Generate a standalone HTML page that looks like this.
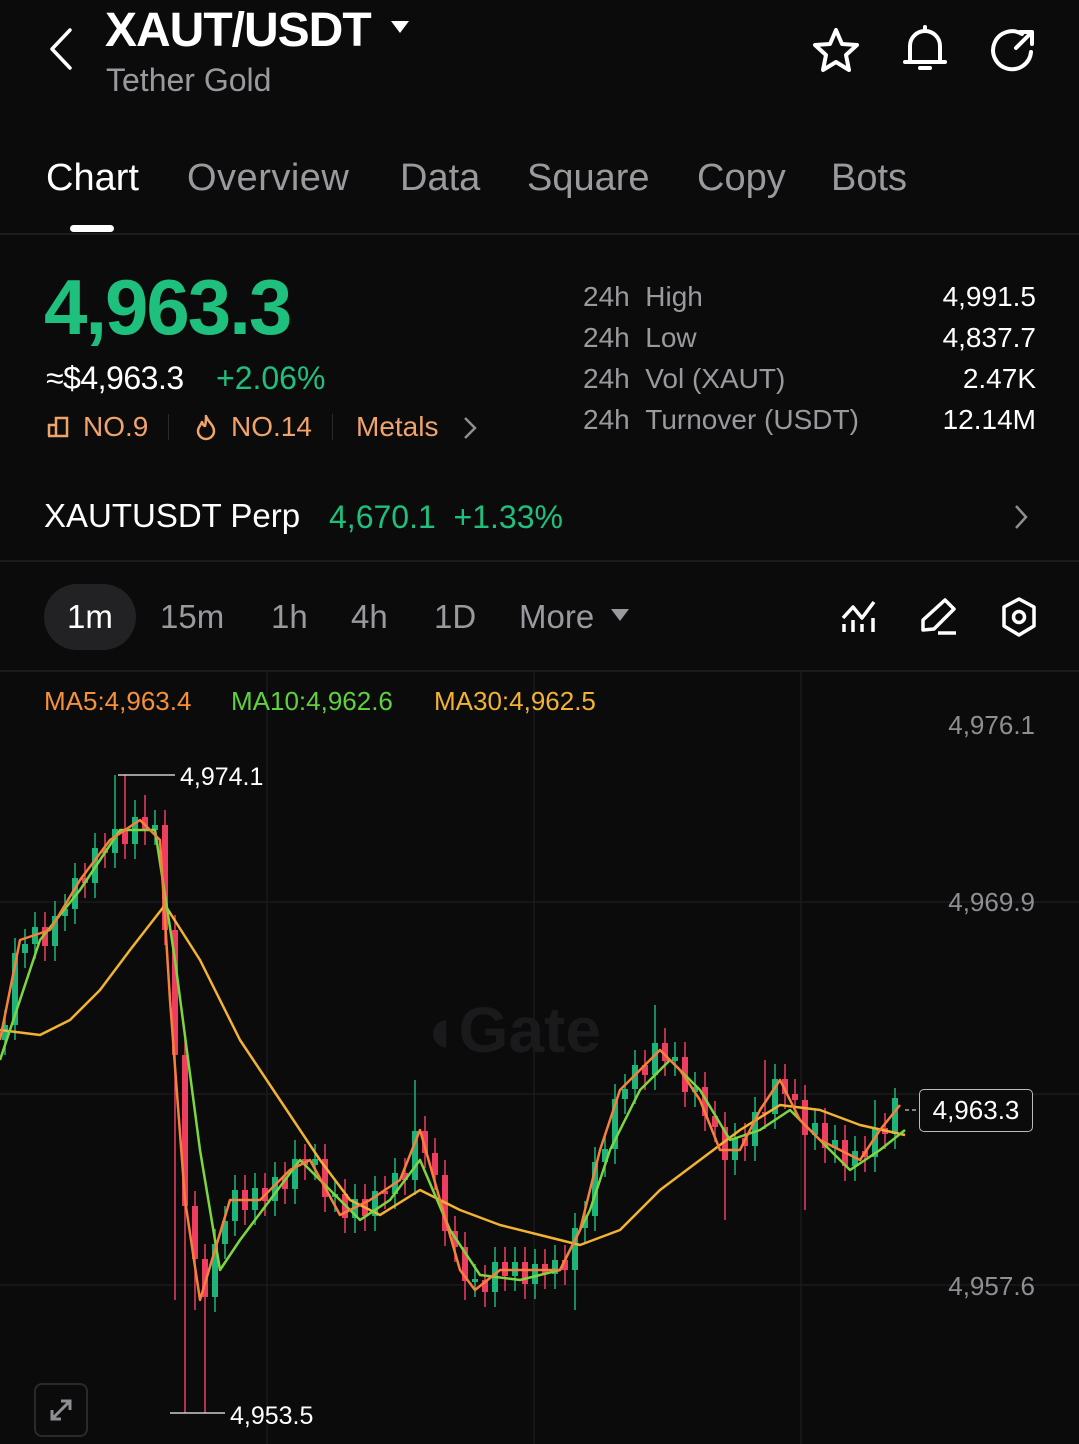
<!DOCTYPE html>
<html><head><meta charset="utf-8"><style>
*{margin:0;padding:0;box-sizing:border-box}
body{width:1079px;height:1444px;background:#0b0b0b;color:#fff;font-family:"Liberation Sans",sans-serif;position:relative;overflow:hidden}
.a{position:absolute;white-space:nowrap}
.g{color:#8e8e93}
</style></head><body>
<svg class="a" style="left:44px;top:26px" width="34" height="46" viewBox="0 0 34 46"><path d="M26 4 L8 23 L26 42" fill="none" stroke="#fff" stroke-width="3.5" stroke-linecap="round" stroke-linejoin="round"/></svg>
<div class="a" style="left:105px;top:3px;font-size:48px;font-weight:bold;letter-spacing:-1px">XAUT/USDT</div>
<svg class="a" style="left:390px;top:20px" width="20" height="14"><path d="M1 1 L19 1 L10 13Z" fill="#fff"/></svg>
<div class="a" style="left:106px;top:62px;font-size:32px;color:#9a9a9e">Tether Gold</div>
<svg class="a" style="left:810px;top:26px" width="52" height="50" viewBox="0 0 52 50"><path d="M26 4 L32 18 L47 19 L36 29 L39 44 L26 36 L13 44 L16 29 L5 19 L20 18Z" fill="none" stroke="#fff" stroke-width="4" stroke-linejoin="round"/></svg>
<svg class="a" style="left:900px;top:24px" width="50" height="52" viewBox="0 0 50 52"><path d="M10 38 L10 22 A15 15 0 0 1 40 22 L40 38 Z M5 38 L45 38 M25 3 L25 7 M20 44 L30 44" fill="none" stroke="#fff" stroke-width="4" stroke-linejoin="round" stroke-linecap="round"/></svg>
<svg class="a" style="left:988px;top:26px" width="50" height="50" viewBox="0 0 50 50"><path d="M34 8 A19 19 0 1 0 43 26" fill="none" stroke="#fff" stroke-width="4" stroke-linecap="round"/><path d="M28 22 L43 7 M32 6 L44 6 L44 18" fill="none" stroke="#fff" stroke-width="4" stroke-linecap="round" stroke-linejoin="round"/></svg>

<div class="a" style="left:46px;top:157px;font-size:38px">Chart</div>
<div class="a" style="left:187px;top:157px;font-size:38px;color:#9a9a9e;letter-spacing:0.5px">Overview</div>
<div class="a" style="left:400px;top:157px;font-size:38px;color:#9a9a9e">Data</div>
<div class="a" style="left:527px;top:157px;font-size:38px;color:#9a9a9e">Square</div>
<div class="a" style="left:697px;top:157px;font-size:38px;color:#9a9a9e">Copy</div>
<div class="a" style="left:831px;top:157px;font-size:38px;color:#9a9a9e">Bots</div>
<div class="a" style="left:70px;top:225px;width:44px;height:7px;border-radius:4px;background:#fff"></div>
<div class="a" style="left:0;top:233px;width:1079px;height:2px;background:#1c1c1e"></div>

<div class="a" style="left:44px;top:262px;font-size:78px;font-weight:bold;color:#1fc07e;letter-spacing:-2px">4,963.3</div>
<div class="a" style="left:46px;top:360px;font-size:32px;letter-spacing:-0.5px">≈$4,963.3</div>
<div class="a" style="left:216px;top:360px;font-size:32px;color:#1fc07e">+2.06%</div>
<svg class="a" style="left:46px;top:415px" width="24" height="24" viewBox="0 0 24 24"><path d="M3 21 L3 10 L10 10 L10 21 M10 21 L10 3 L21 3 L21 21 Z M2 21 L22 21" fill="none" stroke="#f0a36b" stroke-width="2.5"/></svg>
<div class="a" style="left:83px;top:411px;font-size:28px;color:#f0a36b">NO.9</div>
<div class="a" style="left:168px;top:414px;width:1px;height:26px;background:#2a2a2c"></div>
<svg class="a" style="left:194px;top:413px" width="24" height="28" viewBox="0 0 24 28"><path d="M12 3 C14 9 20 12 20 18 A8 8 0 0 1 4 18 C4 14 7 12 8 9 C9 12 10 13 11 13 C12 10 12 6 12 3Z" fill="none" stroke="#f0a36b" stroke-width="2.5" stroke-linejoin="round"/></svg>
<div class="a" style="left:231px;top:411px;font-size:28px;color:#f0a36b">NO.14</div>
<div class="a" style="left:332px;top:414px;width:1px;height:26px;background:#2a2a2c"></div>
<div class="a" style="left:356px;top:411px;font-size:28px;color:#f0a36b">Metals</div>
<svg class="a" style="left:462px;top:416px" width="16" height="24"><path d="M3 2 L13 12 L3 22" fill="none" stroke="#8e8e93" stroke-width="2.5"/></svg>

<div class="a" style="left:583px;top:276px;font-size:28px;line-height:41px;color:#9a9a9e">24h&nbsp;&nbsp;High<br>24h&nbsp;&nbsp;Low<br>24h&nbsp;&nbsp;Vol (XAUT)<br>24h&nbsp;&nbsp;Turnover (USDT)</div>
<div class="a" style="right:43px;top:276px;font-size:28px;line-height:41px;text-align:right">4,991.5<br>4,837.7<br>2.47K<br>12.14M</div>

<div class="a" style="left:44px;top:497px;font-size:33px">XAUTUSDT Perp</div>
<div class="a" style="left:329px;top:499px;font-size:32px;color:#1fc07e">4,670.1&nbsp;&nbsp;+1.33%</div>
<svg class="a" style="left:1013px;top:504px" width="16" height="26"><path d="M3 2 L13 13 L3 24" fill="none" stroke="#8e8e93" stroke-width="2.5"/></svg>
<div class="a" style="left:0;top:560px;width:1079px;height:2px;background:#1c1c1e"></div>

<div class="a" style="left:44px;top:584px;width:92px;height:66px;border-radius:33px;background:#222224"></div>
<div class="a" style="left:67px;top:598px;font-size:33px">1m</div>
<div class="a" style="left:160px;top:598px;font-size:33px;color:#9a9a9e">15m</div>
<div class="a" style="left:271px;top:598px;font-size:33px;color:#9a9a9e">1h</div>
<div class="a" style="left:351px;top:598px;font-size:33px;color:#9a9a9e">4h</div>
<div class="a" style="left:434px;top:598px;font-size:33px;color:#9a9a9e">1D</div>
<div class="a" style="left:519px;top:598px;font-size:33px;color:#9a9a9e">More</div>
<svg class="a" style="left:610px;top:608px" width="20" height="14"><path d="M1 1 L19 1 L10 13Z" fill="#9a9a9e"/></svg>
<svg class="a" style="left:840px;top:598px" width="38" height="36" viewBox="0 0 38 36"><path d="M3 20 L13 9 L22 20 L34 4 M4 26 L4 34 M13 22 L13 34 M22 26 L22 34 M33 20 L33 34" fill="none" stroke="#fff" stroke-width="3.5" stroke-linejoin="round"/></svg>
<svg class="a" style="left:918px;top:596px" width="42" height="40" viewBox="0 0 42 40"><path d="M27 4 L36 13 L16 33 L5 34 L5 24 Z M20 37 L38 37" fill="none" stroke="#fff" stroke-width="3.5" stroke-linejoin="round"/></svg>
<svg class="a" style="left:999px;top:596px" width="40" height="42" viewBox="0 0 40 42"><path d="M20 3 L35 11 L35 30 L20 39 L5 30 L5 11 Z" fill="none" stroke="#fff" stroke-width="3.5" stroke-linejoin="round"/><circle cx="20" cy="21" r="5.5" fill="none" stroke="#fff" stroke-width="3.5"/></svg>
<div class="a" style="left:0;top:670px;width:1079px;height:2px;background:#1c1c1e"></div>

<svg class="a" style="left:0;top:672px" width="1079" height="772" viewBox="0 672 1079 772">
<g stroke="#1a1a1c" stroke-width="1.5">
<line x1="267" y1="672" x2="267" y2="1444"/><line x1="534" y1="672" x2="534" y2="1444"/><line x1="801" y1="672" x2="801" y2="1444"/>
<line x1="0" y1="902" x2="1079" y2="902"/><line x1="0" y1="1094" x2="1079" y2="1094"/><line x1="0" y1="1285" x2="1079" y2="1285"/>
</g>
<text x="420" y="1052" font-size="64" font-weight="bold" fill="#1a1a1c" font-family="Liberation Sans">◖Gate</text>
<path fill="none" stroke="#1db47a" stroke-width="1.5" d="M5 1010V1055 M15 938V1040 M25 929V968 M35 912V959 M55 901V961 M65 894V931 M75 863V924 M95 833V898 M115 775V868 M135 800V859 M155 810V845 M215 1229V1312 M225 1206V1259 M235 1175V1236 M255 1173V1225 M275 1162V1216 M295 1140V1204 M315 1144V1180 M335 1179V1212 M355 1184V1233 M375 1176V1231 M395 1158V1209 M415 1080V1195 M475 1264V1297 M495 1247V1307 M515 1247V1291 M535 1249V1299 M555 1245V1289 M575 1213V1310 M585 1201V1243 M595 1147V1231 M605 1134V1177 M615 1084V1164 M625 1074V1114 M635 1050V1104 M655 1005V1090 M675 1042V1076 M695 1072V1107 M735 1123V1175 M755 1097V1161 M775 1064V1129 M815 1108V1150 M835 1125V1163 M855 1136V1181 M875 1100V1172 M895 1088V1149"/>
<path fill="none" stroke="#1db47a" stroke-width="6" d="M5 1025V1040 M15 953V1025 M25 944V953 M35 927V944 M55 916V946 M65 909V916 M75 878V909 M95 848V883 M115 829V853 M135 817V844 M155 825V830 M215 1244V1297 M225 1221V1244 M235 1190V1221 M255 1188V1210 M275 1177V1201 M295 1159V1189 M315 1159V1165 M335 1194V1197 M355 1199V1218 M375 1191V1216 M395 1173V1194 M415 1131V1180 M475 1279V1282 M495 1262V1292 M515 1262V1276 M535 1264V1284 M555 1260V1274 M575 1228V1270 M585 1216V1228 M595 1162V1216 M605 1149V1162 M615 1099V1149 M625 1089V1099 M635 1065V1089 M655 1043V1075 M675 1057V1061 M695 1087V1092 M735 1138V1160 M755 1112V1146 M775 1079V1114 M815 1123V1135 M835 1140V1148 M855 1151V1166 M875 1128V1157 M895 1098V1134"/>
<path fill="none" stroke="#ee3d5f" stroke-width="1.5" d="M45 912V961 M85 863V898 M105 833V868 M125 775V859 M145 795V845 M165 810V945 M175 915V1300 M185 1040V1413 M195 1191V1310 M205 1244V1413 M245 1175V1225 M265 1173V1216 M285 1162V1204 M305 1144V1180 M325 1144V1212 M345 1179V1233 M365 1184V1231 M385 1176V1209 M405 1158V1195 M425 1116V1168 M435 1138V1190 M445 1160V1246 M455 1216V1262 M465 1232V1300 M485 1265V1307 M505 1247V1291 M525 1247V1299 M545 1249V1289 M565 1245V1285 M645 1050V1090 M665 1028V1076 M685 1042V1107 M705 1072V1131 M715 1101V1142 M725 1112V1220 M745 1123V1161 M765 1060V1129 M785 1064V1109 M795 1079V1115 M805 1085V1210 M825 1108V1163 M845 1125V1181 M865 1136V1172 M885 1113V1149"/>
<path fill="none" stroke="#ee3d5f" stroke-width="6" d="M45 927V946 M85 878V883 M105 848V853 M125 829V844 M145 817V830 M165 825V930 M175 930V1055 M185 1055V1206 M195 1206V1259 M205 1259V1297 M245 1190V1210 M265 1188V1201 M285 1177V1189 M305 1159V1165 M325 1159V1197 M345 1194V1218 M365 1199V1216 M385 1191V1194 M405 1173V1180 M425 1131V1153 M435 1153V1175 M445 1175V1231 M455 1231V1247 M465 1247V1281 M485 1280V1292 M505 1262V1276 M525 1262V1284 M545 1264V1274 M565 1260V1270 M645 1065V1075 M665 1043V1061 M685 1057V1092 M705 1087V1116 M715 1116V1127 M725 1127V1160 M745 1138V1146 M765 1112V1114 M785 1079V1094 M795 1094V1100 M805 1100V1135 M825 1123V1148 M845 1140V1166 M865 1151V1157 M885 1128V1134"/>
<polyline fill="none" stroke="#f2b233" stroke-width="2.5" stroke-linejoin="round" points="0,1030 40,1035 70,1020 100,990 130,950 165,905 200,960 240,1040 280,1100 320,1160 350,1200 380,1215 420,1190 460,1210 500,1225 540,1235 580,1245 620,1230 660,1190 700,1160 740,1130 780,1105 820,1110 860,1125 905,1135"/>
<polyline fill="none" stroke="#7dd63f" stroke-width="2.5" stroke-linejoin="round" points="0,1060 40,940 80,890 120,830 155,830 175,960 200,1150 220,1270 240,1240 270,1200 300,1160 330,1190 360,1220 390,1200 420,1160 450,1230 480,1275 520,1280 560,1270 590,1210 610,1150 640,1090 670,1060 700,1090 730,1140 760,1130 790,1110 820,1140 850,1170 880,1150 905,1130"/>
<polyline fill="none" stroke="#f5813a" stroke-width="2.5" stroke-linejoin="round" points="0,1040 20,940 50,930 80,880 110,840 140,820 160,840 170,1000 185,1200 200,1300 215,1250 230,1200 260,1200 290,1170 310,1160 340,1215 370,1200 400,1180 420,1130 440,1200 460,1270 475,1290 500,1270 530,1270 560,1270 580,1230 600,1150 620,1090 640,1070 660,1050 680,1070 700,1100 720,1150 740,1150 760,1110 780,1080 800,1120 820,1140 840,1150 860,1160 880,1130 900,1105"/>
<line x1="118" y1="775" x2="175" y2="775" stroke="#ccc" stroke-width="1.5"/>
<line x1="170" y1="1413" x2="225" y2="1413" stroke="#ccc" stroke-width="1.5"/>
<text x="180" y="785" font-size="25" fill="#fff" font-family="Liberation Sans">4,974.1</text>
<text x="230" y="1424" font-size="25" fill="#fff" font-family="Liberation Sans">4,953.5</text>
<line x1="905" y1="1110" x2="918" y2="1110" stroke="#aaa" stroke-width="1.5" stroke-dasharray="4 3"/>
</svg>
<div class="a" style="left:44px;top:686px;font-size:26px;color:#f5913c">MA5:4,963.4</div>
<div class="a" style="left:231px;top:686px;font-size:26px;color:#5fd13d">MA10:4,962.6</div>
<div class="a" style="left:434px;top:686px;font-size:26px;color:#f2b233">MA30:4,962.5</div>
<div class="a g" style="right:44px;top:710px;font-size:26px">4,976.1</div>
<div class="a g" style="right:44px;top:887px;font-size:26px">4,969.9</div>
<div class="a g" style="right:44px;top:1271px;font-size:26px">4,957.6</div>
<div class="a" style="left:919px;top:1089px;width:114px;height:43px;border:1.5px solid #bbb;border-radius:5px;background:#0b0b0b;font-size:26px;text-align:center;line-height:40px">4,963.3</div>
<div class="a" style="left:34px;top:1383px;width:54px;height:54px;border:2px solid #2a2a2c;border-radius:8px"></div>
<svg class="a" style="left:46px;top:1395px" width="30" height="30"><path d="M6 24 L24 6 M15 6 L24 6 L24 15 M6 15 L6 24 L15 24" fill="none" stroke="#8e8e93" stroke-width="3"/></svg>
</body></html>
